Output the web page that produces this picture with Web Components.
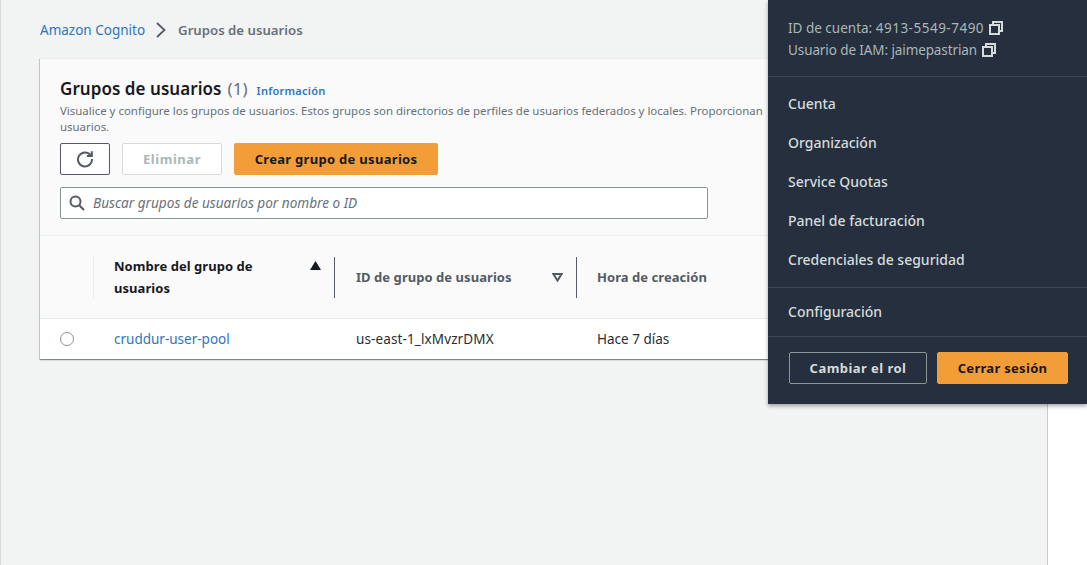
<!DOCTYPE html>
<html lang="es">
<head>
<meta charset="utf-8">
<title>Grupos de usuarios</title>
<style>
    html, body { margin: 0; height: 100%; }
    body { font-family: "Noto Sans", "Open Sans", sans-serif; font-size: 14px; background: #fff; overflow: hidden; }
</style>
</head>
<body>
<console-page>
    <bread-crumbs slot="crumbs"></bread-crumbs>
    <pool-card slot="card"></pool-card>
    <account-menu slot="menu"></account-menu>
</console-page>

<script>
// Small icons shared between components
const ICONS = {
    copy: `<svg width="16" height="16" viewBox="0 0 16 16" fill="none" stroke="currentColor" stroke-width="2"><rect x="2" y="5" width="9" height="9"/><path d="M5 4V2h9v9h-2"/></svg>`,
    refresh: `<svg width="18" height="18" viewBox="0 0 18 18" fill="none" stroke="currentColor" stroke-width="2"><path d="M14.6 5.2A7 7 0 1 0 16 9"/><path d="M15.8 1.2v4.9h-4.9" stroke-linejoin="miter"/></svg>`,
    search: `<svg width="16" height="16" viewBox="0 0 16 16" fill="none" stroke="currentColor" stroke-width="2"><circle cx="6.5" cy="6.5" r="5"/><path d="M10.2 10.2 15 15"/></svg>`,
    chevron: `<svg width="12" height="16" viewBox="0 0 12 16" fill="none" stroke="currentColor" stroke-width="1.8"><path d="M2 1l7.5 7L2 15"/></svg>`
};

// Plain button, variant comes from the attribute
class AwsButton extends HTMLElement {
    constructor() {
        super();
        this.attachShadow({ mode: 'open' });
    }

    connectedCallback() {
        this.shadowRoot.innerHTML = `
            <style>
                :host {
                    display: inline-flex;
                    box-sizing: border-box;
                    align-items: center;
                    justify-content: center;
                    height: 32px;
                    border: 1px solid #545b64;
                    border-radius: 2px;
                    font-size: 13px;
                    font-weight: 700;
                    letter-spacing: 0.3px;
                    color: #545b64;
                    background: #fff;
                    white-space: nowrap;
                }
                :host([variant="primary"]) {
                    background: #f29d38;
                    border-color: #f29d38;
                    color: #16191f;
                }
                :host([variant="disabled"]) {
                    border-color: #d5dbdb;
                    color: #aab7b8;
                    letter-spacing: 0.55px;
                }
                :host([variant="dark"]) {
                    background: transparent;
                    border-color: #879596;
                    color: #d5dbdb;
                    letter-spacing: 0.45px;
                }
            </style>
            <slot></slot>
        `;
    }
}

class BreadCrumbs extends HTMLElement {
    constructor() {
        super();
        this.attachShadow({ mode: 'open' });
    }

    connectedCallback() {
        this.shadowRoot.innerHTML = `
            <style>
                :host {
                    display: flex;
                    align-items: center;
                    height: 20px;
                    font-size: 13.5px;
                }
                a { color: #2f75bb; text-decoration: none; }
                .sep { display: flex; color: #545b64; margin: 0 11px 0 10px; }
                .current { color: #687078; font-weight: 600; font-size: 13.2px; }
            </style>
            <a href="#">Amazon Cognito</a>
            <span class="sep">${ICONS.chevron}</span>
            <span class="current">Grupos de usuarios</span>
        `;
    }
}

class PoolTable extends HTMLElement {
    constructor() {
        super();
        this.attachShadow({ mode: 'open' });
    }

    connectedCallback() {
        this.shadowRoot.innerHTML = `
            <style>
                :host {
                    display: block;
                    font-size: 13.5px;
                }
                .row {
                    display: grid;
                    grid-template-columns: 54px 241px 242px 1fr;
                }
                .head {
                    height: 82px;
                    align-items: center;
                    background: #fafafa;
                    border-bottom: 1px solid #eaeded;
                    font-size: 13px;
                    font-weight: 700;
                    letter-spacing: 0.05px;
                    color: #545b64;
                    line-height: 22px;
                }
                .th {
                    box-sizing: border-box;
                    height: 41px;
                    display: flex;
                    align-items: center;
                    justify-content: space-between;
                    padding: 0 13px 0 20px;
                    border-right: 1px solid #545b64;
                }
                .th.check { border-right: 1px solid #eaeded; padding: 0; }
                .th.sorted { color: #16191f; align-items: flex-start; }
                .th.sorted span { width: 170px; margin-top: -2px; }
                .th.idcol { padding-left: 21px; }
                .th:last-child { border-right: 0; }
                .body {
                    height: 40px;
                    align-items: center;
                    background: #fff;
                    color: #2a2e33;
                }
                .cell { padding-left: 20px; }
                .id { padding-left: 21px; letter-spacing: 0.12px; }
                .radio { padding-left: 20px; display: flex; }
                .radio i {
                    box-sizing: border-box;
                    width: 14px;
                    height: 14px;
                    border: 1.5px solid #879596;
                    border-radius: 50%;
                    background: #fff;
                }
                a { color: #2f75bb; text-decoration: none; }
                svg { flex: none; }
            </style>
            <div class="row head">
                <div class="th check"></div>
                <div class="th sorted">
                    <span>Nombre del grupo de usuarios</span>
                    <svg width="11" height="9" viewBox="0 0 11 9" style="margin-top:4px"><path d="M5.5 0 11 9H0z" fill="#16191f"/></svg>
                </div>
                <div class="th idcol">
                    <span>ID de grupo de usuarios</span>
                    <svg width="11" height="9" viewBox="0 0 11 9"><path d="M1.3 1h8.4L5.5 7.6z" fill="none" stroke="#545b64" stroke-width="2"/></svg>
                </div>
                <div class="th"><span>Hora de creación</span></div>
            </div>
            <div class="row body">
                <div class="radio"><i></i></div>
                <div class="cell"><a href="#">cruddur-user-pool</a></div>
                <div class="cell id">us-east-1_lxMvzrDMX</div>
                <div class="cell">Hace 7 días</div>
            </div>
        `;
    }
}

class PoolCard extends HTMLElement {
    constructor() {
        super();
        this.attachShadow({ mode: 'open' });
    }

    connectedCallback() {
        this.shadowRoot.innerHTML = `
            <style>
                :host {
                    display: block;
                    background: #fafafa;
                    border-top: 1px solid #eaeded;
                    box-shadow: 0 1px 1px 0 rgba(0, 28, 36, 0.3), 1px 1px 1px 0 rgba(0, 28, 36, 0.15), -1px 1px 1px 0 rgba(0, 28, 36, 0.15);
                }
                header {
                    padding: 18px 20px 16px;
                    border-bottom: 1px solid #eaeded;
                }
                h1 {
                    margin: 0;
                    display: flex;
                    align-items: baseline;
                    font-size: 17px;
                    letter-spacing: 0.05px;
                    line-height: 24px;
                    font-weight: 600;
                    color: #16191f;
                }
                .count { font-weight: 400; color: #687078; margin-left: 6px; }
                .info {
                    margin-left: 9px;
                    font-size: 11px;
                    font-weight: 600;
                    letter-spacing: 0.25px;
                    color: #2f75bb;
                }
                p {
                    margin: 0;
                    font-size: 11.45px;
                    line-height: 16px;
                    white-space: nowrap;
                    color: #687078;
                }
                .actions {
                    display: flex;
                    gap: 12px;
                    margin-top: 8px;
                }
                .refresh { width: 50px; color: #545b64; }
                .refresh svg { display: block; }
                .delete { width: 100px; }
                .create { width: 204px; }
                .search {
                    box-sizing: border-box;
                    display: flex;
                    align-items: center;
                    gap: 8px;
                    width: 648px;
                    height: 32px;
                    margin-top: 12px;
                    padding: 0 8px;
                    background: #fff;
                    border: 1px solid #879596;
                    border-radius: 2px;
                    color: #687078;
                    font-size: 13.6px;
                    font-style: italic;
                }
                .search span { margin-top: -2px; }
                .search svg { flex: none; color: #545b64; }
            </style>
            <header>
                <h1>Grupos de usuarios <span class="count">(1)</span> <span class="info">Información</span></h1>
                <p>Visualice y configure los grupos de usuarios. Estos grupos son directorios de perfiles de usuarios federados y locales. Proporcionan<br>usuarios.</p>
                <div class="actions">
                    <aws-button class="refresh">${ICONS.refresh}</aws-button>
                    <aws-button class="delete" variant="disabled">Eliminar</aws-button>
                    <aws-button class="create" variant="primary">Crear grupo de usuarios</aws-button>
                </div>
                <div class="search">${ICONS.search}<span>Buscar grupos de usuarios por nombre o ID</span></div>
            </header>
            <pool-table></pool-table>
        `;
    }
}

class AccountMenu extends HTMLElement {
    constructor() {
        super();
        this.attachShadow({ mode: 'open' });
    }

    connectedCallback() {
        const links = ['Cuenta', 'Organización', 'Service Quotas', 'Panel de facturación', 'Credenciales de seguridad'];
        this.shadowRoot.innerHTML = `
            <style>
                :host {
                    display: block;
                    background: #252f3e;
                    color: #d5dbdb;
                    font-size: 14px;
                    box-shadow: 0 2px 4px rgba(0, 0, 0, 0.35);
                }
                .ids {
                    padding: 17px 20px 15px;
                    color: #aab7b8;
                    font-size: 13.5px;
                    line-height: 22px;
                    border-bottom: 1px solid #414750;
                }
                .ids div { display: flex; align-items: center; gap: 3.5px; white-space: pre; }
                .ids b { font-weight: 400; letter-spacing: 0.5px; }
                .ids .user { letter-spacing: -0.1px; }
                .ids svg { color: #d5dbdb; flex: none; }
                nav {
                    padding: 7px 20px 8px;
                    border-bottom: 1px solid #414750;
                    font-weight: 500;
                }
                nav a, .config {
                    display: flex;
                    align-items: center;
                    height: 39px;
                    color: #d5dbdb;
                    text-decoration: none;
                }
                .config {
                    box-sizing: border-box;
                    margin: 0 20px;
                    height: 48px;
                    padding-bottom: 2px;
                    font-weight: 500;
                }
                .foot {
                    display: flex;
                    gap: 10px;
                    padding: 15px 19px 20px 21px;
                    border-top: 1px solid #414750;
                }
                .foot aws-button { width: 138px; }
                .foot aws-button[variant="primary"] { width: 131px; }
            </style>
            <div class="ids">
                <div><span>ID de cuenta: <b>4913-5549-7490</b></span>${ICONS.copy}</div>
                <div><span class="user">Usuario de IAM: jaimepastrian</span>${ICONS.copy}</div>
            </div>
            <nav>${links.map(l => `<a href="#">${l}</a>`).join('')}</nav>
            <a class="config" href="#">Configuración</a>
            <div class="foot">
                <aws-button variant="dark">Cambiar el rol</aws-button>
                <aws-button variant="primary">Cerrar sesión</aws-button>
            </div>
        `;
    }
}

// Page frame: grey content area, white strip on the right, menu over the top
class ConsolePage extends HTMLElement {
    constructor() {
        super();
        this.attachShadow({ mode: 'open' });
    }

    connectedCallback() {
        this.shadowRoot.innerHTML = `
            <style>
                :host {
                    display: block;
                    position: relative;
                    height: 565px;
                    overflow: hidden;
                }
                .content {
                    box-sizing: border-box;
                    width: 1048px;
                    height: 565px;
                    padding: 20px 40px 0 39px;
                    background: #f2f3f3;
                    border-left: 1px solid #d5dbdb;
                    border-right: 1px solid #c8cccc;
                }
                .crumbs { margin-bottom: 18px; }
                .menu {
                    position: absolute;
                    top: 0;
                    right: 0;
                    width: 319px;
                }
            </style>
            <div class="content">
                <div class="crumbs"><slot name="crumbs"></slot></div>
                <slot name="card"></slot>
            </div>
            <div class="menu"><slot name="menu"></slot></div>
        `;
    }
}

customElements.define('aws-button', AwsButton);
customElements.define('bread-crumbs', BreadCrumbs);
customElements.define('pool-table', PoolTable);
customElements.define('pool-card', PoolCard);
customElements.define('account-menu', AccountMenu);
customElements.define('console-page', ConsolePage);
</script>
</body>
</html>
